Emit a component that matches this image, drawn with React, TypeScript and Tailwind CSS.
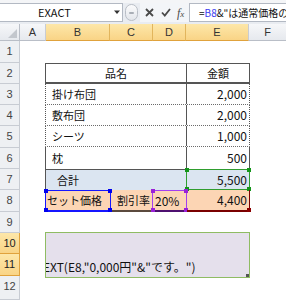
const jp = "font-['Noto_Sans_CJK_JP',sans-serif]";

const columns = [
  { label: "A", cls: "w-[26px] bg-gradient-to-b from-[#f6f7f9] to-[#e6e9ee] border-r border-[#c8ccd3] border-b border-b-[#b9bec7]" },
  { label: "B", cls: "w-[64px] bg-gradient-to-b from-[#fde7a9] to-[#f9d486] border-r border-[#e2b55c] border-b border-b-[#e0a23c]" },
  { label: "C", cls: "w-[43px] bg-gradient-to-b from-[#fde7a9] to-[#f9d486] border-r border-[#e2b55c] border-b border-b-[#e0a23c]" },
  { label: "D", cls: "w-[33px] bg-gradient-to-b from-[#fde7a9] to-[#f9d486] border-r border-[#e2b55c] border-b border-b-[#e0a23c]" },
  { label: "E", cls: "w-[63px] bg-gradient-to-b from-[#fde7a9] to-[#f9d486] border-r border-[#c8ccd3] border-b border-b-[#e0a23c]" },
  { label: "F", cls: "flex-1 bg-gradient-to-b from-[#f6f7f9] to-[#e6e9ee] border-b border-b-[#b9bec7]" },
];

const rows = [
  { n: 1, h: "h-[22px]", sel: false },
  { n: 2, h: "h-[21px]", sel: false },
  { n: 3, h: "h-[21px]", sel: false },
  { n: 4, h: "h-[21px]", sel: false },
  { n: 5, h: "h-[22px]", sel: false },
  { n: 6, h: "h-[21px]", sel: false },
  { n: 7, h: "h-[21px]", sel: false },
  { n: 8, h: "h-[22px]", sel: false },
  { n: 9, h: "h-[21px]", sel: false },
  { n: 10, h: "h-[21px]", sel: true },
  { n: 11, h: "h-[22px]", sel: true },
  { n: 12, h: "h-[24px]", sel: false },
];

const items = [
  { name: "掛け布団", price: "2,000", h: "h-[21px]", line: "border-b border-dotted border-b-[#6b6b6b]" },
  { name: "敷布団", price: "2,000", h: "h-[21px]", line: "border-b border-dotted border-b-[#6b6b6b]" },
  { name: "シーツ", price: "1,000", h: "h-[21px]", line: "border-b border-dotted border-b-[#6b6b6b]" },
  { name: "枕", price: "500", h: "h-[22px]", line: "" },
];

function FormulaBar() {
  return (
    <div className="h-[24px] flex bg-[#e9ecf1] border-t-[3px] border-[#f4f5f7]">
      <div className="w-[123px] h-[19px] bg-white border-y border-r border-[#b3b9c3] flex items-center relative">
        <span className="pl-[38px] text-[11px] text-[#111]">EXACT</span>
        <svg className="absolute left-[114px] top-[6px]" width="6" height="5" viewBox="0 0 6 5">
          <path d="M0 0.5 H6 L3 4 Z" fill="#333" />
        </svg>
      </div>
      <div className="w-[17px] h-[19px] flex items-center justify-center">
        <div className="w-[13px] h-[17px] rounded-full border border-[#b9bec6] bg-gradient-to-b from-[#fbfbfc] to-[#e3e6eb] flex items-center justify-center">
          <div className="w-[5px] h-[2px] bg-[#a9aeb6] rounded-full" />
        </div>
      </div>
      <div className="w-[49px] h-[19px] bg-[#f3f5f8] flex items-center">
        <svg className="ml-[5px]" width="9" height="9" viewBox="0 0 9 9">
          <path d="M1 1 L8 8 M8 1 L1 8" stroke="#4a4a4a" strokeWidth="1.8" />
        </svg>
        <svg className="ml-[7px]" width="10" height="9" viewBox="0 0 10 9">
          <path d="M1 4.5 L3.8 7.5 L9 1" stroke="#4a4a4a" strokeWidth="1.8" fill="none" />
        </svg>
        <span className="ml-[6px] font-['Liberation_Serif',serif] italic text-[12px] text-[#4a4a4a] leading-none">
          f<span className="text-[9px]">x</span>
        </span>
      </div>
      <div className="flex-1 h-[19px] bg-white border-y border-l border-[#b3b9c3] flex items-center overflow-hidden whitespace-nowrap">
        <span className="pl-[9px] text-[10px] text-[#111]">
          =<span className="text-[#3b3bef]">B8</span>&amp;"は通常価格の"&amp;TEXT
        </span>
      </div>
    </div>
  );
}

function ColumnHeaders() {
  return (
    <div className="h-[17px] flex font-['Liberation_Sans',sans-serif] text-[11px] text-[#333]">
      <div className="w-[20px] bg-gradient-to-b from-[#f6f7f9] to-[#e6e9ee] border-r border-b border-[#b9bec7] relative">
        <svg className="absolute right-[2px] bottom-[2px]" width="9" height="9" viewBox="0 0 9 9">
          <path d="M9 0 V9 H0 Z" fill="#c3c7cd" />
        </svg>
      </div>
      {columns.map((c) => (
        <div key={c.label} className={`${c.cls} flex items-center justify-center`}>
          {c.label}
        </div>
      ))}
    </div>
  );
}

function RowHeaders() {
  return (
    <div className="w-[20px] flex flex-col font-['Liberation_Sans',sans-serif] text-[11px]">
      {rows.map((r) => (
        <div
          key={r.n}
          className={`${r.h} shrink-0 flex items-center justify-center border-b border-r ${
            r.sel
              ? "bg-gradient-to-b from-[#fde7a9] to-[#f9d486] border-[#e0a23c] text-[#222]"
              : "bg-[#eef0f3] border-[#c8ccd3] text-[#444]"
          }`}
        >
          <span className={r.n === 12 ? "-mt-[3px]" : ""}>{r.n}</span>
        </div>
      ))}
    </div>
  );
}

function Table() {
  return (
    <div className="ml-[25px] w-[205px] text-[11px] text-[#111]">
      <div className="h-[21px] flex border-t border-x border-b-2 border-[#555]">
        <div className="w-[141px] border-r border-[#555] flex items-center justify-center">品名</div>
        <div className="flex-1 flex items-center justify-center">金額</div>
      </div>
      {items.map((it) => (
        <div key={it.name} className={`${it.h} flex border-x border-[#555] ${it.line}`}>
          <div className="w-[141px] border-r border-[#555] flex items-center pl-[6px]">{it.name}</div>
          <div className="flex-1 flex items-center justify-end pr-[2px] text-[12px]">{it.price}</div>
        </div>
      ))}
      <div className="h-[21px] flex">
        <div className="w-[141px] bg-[#dbe5f1] border-t border-l border-[#555] flex items-center pl-[11px]">合計</div>
        <div className="flex-1 bg-[#dbe5f1] border border-[#2f9d2f] relative flex items-center justify-end pr-[2px] text-[12px]">
          5,500
          <span className="absolute -left-[2px] -top-[2px] w-[4px] h-[4px] bg-[#13951a]" />
          <span className="absolute -right-[2px] -top-[2px] w-[4px] h-[4px] bg-[#13951a]" />
          <span className="absolute -left-[2px] -bottom-[2px] w-[4px] h-[4px] bg-[#13951a]" />
          <span className="absolute -right-[2px] -bottom-[2px] w-[4px] h-[4px] bg-[#13951a]" />
        </div>
      </div>
      <div className="h-[22px] flex bg-[#fcd5b4]">
        <div className="w-[66px] border border-b-2 border-[#1515ff] relative flex items-center pl-[1px]">
          セット価格
          <span className="absolute -left-[2px] -top-[2px] w-[4px] h-[4px] bg-[#0000ee]" />
          <span className="absolute -right-[2px] -top-[2px] w-[4px] h-[4px] bg-[#0000ee]" />
          <span className="absolute -left-[2px] -bottom-[2px] w-[4px] h-[4px] bg-[#0000ee]" />
          <span className="absolute -right-[2px] -bottom-[2px] w-[4px] h-[4px] bg-[#0000ee]" />
        </div>
        <div className="w-[41px] border-b-2 border-[#5b4a3e] flex items-center justify-end pr-[2px]">割引率</div>
        <div className="w-[35px] border border-b-2 border-[#a33ef0] border-b-[#4d1070] relative flex items-center pl-[2px] text-[12px]">
          20%
          <span className="absolute -left-[2px] -top-[2px] w-[4px] h-[4px] bg-[#9a20d8]" />
          <span className="absolute -right-[2px] -top-[2px] w-[4px] h-[4px] bg-[#9a20d8]" />
          <span className="absolute -left-[2px] -bottom-[2px] w-[4px] h-[4px] bg-[#9a20d8]" />
          <span className="absolute -right-[2px] -bottom-[2px] w-[4px] h-[4px] bg-[#9a20d8]" />
        </div>
        <div className="flex-1 border-r border-b-2 border-[#7a0000] relative flex items-center justify-end pr-[2px] text-[12px]">
          4,400
          <span className="absolute -right-[2px] -bottom-[2px] w-[4px] h-[4px] bg-[#8a0000]" />
        </div>
      </div>
    </div>
  );
}

function Cells() {
  return (
    <div className="flex-1 flex flex-col">
      <div className="h-[22px] shrink-0" />
      <Table />
      <div className="h-[20px] shrink-0" />
      <div className="ml-[25px] w-[205px] h-[46px] shrink-0 bg-[#e5e0ec] border border-[#8fbc63] flex items-end overflow-hidden whitespace-nowrap relative">
        <span className="-ml-[3px] pb-[1px] text-[12px] text-[#111]">EXT(E8,"0,000円"&amp;"です。")</span>
        <span className="absolute right-0 bottom-0 w-[3px] h-[3px] bg-[#555]" />
      </div>
    </div>
  );
}

export default function App() {
  return (
    <div className={`w-[286px] h-[300px] overflow-hidden bg-white ${jp} text-[11px] text-black`}>
      <FormulaBar />
      <ColumnHeaders />
      <div className="flex">
        <RowHeaders />
        <Cells />
      </div>
    </div>
  );
}
